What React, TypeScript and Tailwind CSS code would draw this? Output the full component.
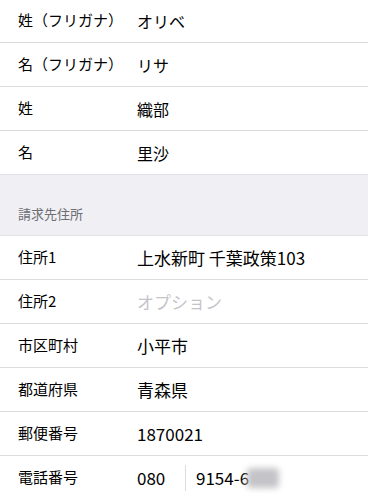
import React from "react";

type Field = { label: string; value: string; placeholder?: boolean };

const nameFields: Field[] = [
  { label: "姓（フリガナ）", value: "オリベ" },
  { label: "名（フリガナ）", value: "リサ" },
  { label: "姓", value: "織部" },
  { label: "名", value: "里沙" },
];

const addressFields: Field[] = [
  { label: "住所1", value: "上水新町 千葉政策103" },
  { label: "住所2", value: "オプション", placeholder: true },
  { label: "市区町村", value: "小平市" },
  { label: "都道府県", value: "青森県" },
  { label: "郵便番号", value: "1870021" },
];

function Row({ field, first, big }: { field: Field; first?: boolean; big?: boolean }) {
  return (
    <div className={`pl-[18px] ${first ? "" : "border-t border-[#dcdce0]"}`}>
      <div className="flex items-center h-[43px]">
        <span className="w-[119px] shrink-0 text-[15px] text-black">{field.label}</span>
        <span
          className={`${big ? "text-[17px]" : "text-[16px]"} ${
            field.placeholder ? "text-[#c4c4c9]" : "text-black"
          }`}
        >
          {field.value}
        </span>
      </div>
    </div>
  );
}

export default function App() {
  return (
    <div
      className="w-[368px] h-[500px] overflow-hidden bg-white"
      style={{ fontFamily: '"Noto Sans CJK JP", "Noto Sans", sans-serif' }}
    >
      <div className="-mt-px">
        {nameFields.map((f, i) => (
          <Row key={f.label} field={f} first={i === 0} />
        ))}
      </div>
      <div className="h-[62px] border-y border-[#e2e2e6] bg-[#efeff4] pl-[18px] flex items-end pb-[12px]">
        <span className="text-[13px] text-[#6d6d72]">請求先住所</span>
      </div>
      <div>
        {addressFields.map((f, i) => (
          <Row key={f.label} field={f} first={i === 0} big />
        ))}
        <div className="pl-[18px] border-t border-[#dcdce0]">
          <div className="flex items-center h-[43px]">
            <span className="w-[119px] shrink-0 text-[15px] text-black">電話番号</span>
            <span className="w-[48px] text-[17px] text-black">080</span>
            <span className="h-[26px] border-l border-[#dcdce0]" />
            <span className="pl-[10px] text-[17px] text-black">9154-6</span>
            <span className="ml-[-2px] h-[20px] w-[32px] rounded-sm bg-[#c4c4c8] blur-[3px]" />
          </div>
        </div>
      </div>
    </div>
  );
}
